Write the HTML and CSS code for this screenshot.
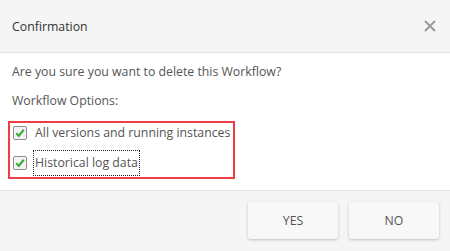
FILE: index.html
```html
<!DOCTYPE html>
<html>
<head>
  <title>Confirmation</title>
  <link rel="stylesheet" href="styles.css">
</head>
<body>
  <div class="dialog">
    <div class="dialog-header">
      <h1>Confirmation</h1>
      <button class="close-button" aria-label="Close">
        <svg width="12" height="12" viewBox="0 0 12 12">
          <path d="M1 1 L11 11 M11 1 L1 11" stroke="#9a9a9a" stroke-width="2" fill="none"/>
        </svg>
      </button>
    </div>
    <div class="dialog-body">
      <p>Are you sure you want to delete this Workflow?</p>
      <p class="options-title">Workflow Options:</p>
      <div class="options">
        <label class="option first">
          <span class="check">
            <svg width="14" height="14" viewBox="0 0 14 14">
              <rect x="0.5" y="0.5" width="13" height="13" rx="1.5" fill="#f4f4f4" stroke="#8e8e8e"/>
              <path d="M3.2 7.2 L5.8 9.8 L10.8 3.8" stroke="#3fae3f" stroke-width="2.2" fill="none"/>
            </svg>
          </span>
          <span class="option-text">All versions and running instances</span>
        </label>
        <label class="option">
          <span class="check">
            <svg width="14" height="14" viewBox="0 0 14 14">
              <rect x="0.5" y="0.5" width="13" height="13" rx="1.5" fill="#f4f4f4" stroke="#8e8e8e"/>
              <path d="M3.2 7.2 L5.8 9.8 L10.8 3.8" stroke="#3fae3f" stroke-width="2.2" fill="none"/>
            </svg>
          </span>
          <span class="option-text focused">Historical log data</span>
        </label>
      </div>
    </div>
    <div class="dialog-footer">
      <button class="dialog-button">YES</button>
      <button class="dialog-button">NO</button>
    </div>
  </div>
</body>
</html>
```

FILE: styles.css
```css
/* Confirmation dialog */
body {
  margin: 0;
  font-family: "Open Sans", Arial, sans-serif;
  font-size: 12.3px;
  color: #555;
  background-color: #fff;
}

.dialog {
  width: 450px;
  height: 251px;
  display: flex;
  flex-direction: column;
}

.dialog-header {
  height: 52px;
  display: flex;
  align-items: center;
  justify-content: space-between;
  padding: 0 14px 0 12px;
  background-color: #f5f5f5;
  border-bottom: 1px solid #e3e3e3;
}

.dialog-header h1 {
  margin: 0;
  font-size: 12.3px;
  font-weight: normal;
  color: #333;
}

.close-button {
  border: none;
  background: none;
  padding: 0;
  width: 12px;
  height: 12px;
  display: flex;
  cursor: pointer;
}

.dialog-body {
  flex: 1;
  padding: 10px 8px 0 8px;
}

.dialog-body p {
  margin: 0 0 11px 4px;
  line-height: 18px;
}

.options {
  width: 220px;
  border: 2px solid #ef3d43;
  padding: 0 0 2px 3px;
}

.option {
  display: flex;
  align-items: center;
  height: 20px;
}

.option + .option {
  height: 24px;
  margin-top: 8px;
}

.check {
  display: flex;
  width: 14px;
  height: 14px;
  margin-right: 8px;
}

.option-text {
  line-height: 20px;
}

.option-text.focused {
  margin-left: -1px;
  padding: 2px 1px;
  outline: 1px dotted #222;
}

.dialog-footer {
  height: 61px;
  display: flex;
  justify-content: flex-end;
  align-items: center;
  gap: 11px;
  padding: 0 11px 1px 0;
  background-color: #f5f5f5;
  border-top: 1px solid #e3e3e3;
  box-sizing: border-box;
}

.dialog-button {
  width: 90px;
  height: 37px;
  border: none;
  border-radius: 3px;
  background-color: #f8f8f8;
  box-shadow: 0 1px 3px rgba(0, 0, 0, 0.22);
  font-family: "Open Sans", Arial, sans-serif;
  font-size: 12.3px;
  color: #555;
  cursor: pointer;
}
```
